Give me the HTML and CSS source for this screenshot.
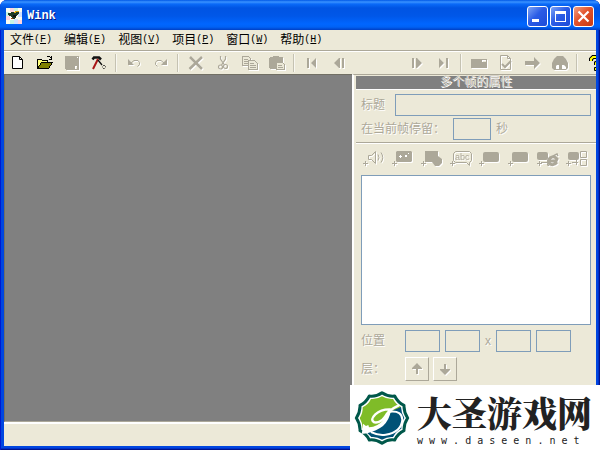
FILE: index.html
```html
<!DOCTYPE html>
<html lang="zh-CN">
<head>
<meta charset="utf-8">
<title>Wink</title>
<link rel="stylesheet" href="styles.css">
</head>
<body>
<div class="window">
  <header class="titlebar">
    <svg class="app-icon" width="16" height="16" viewBox="0 0 16 16" shape-rendering="crispEdges"><path fill="#fdfdf0" d="M0 0h16v16H0z"/><path fill="#ffd5dc" d="M4 0h4v4H4zM0 8h4v4H0zM12 12h4v4h-4z"/><path fill="#c8f5e4" d="M0 4h3v4H0zM8 0h4v3H8zM4 12h4v4H4z"/><path fill="#d2e2ff" d="M12 4h4v5h-4zM8 11h4v5H8z"/><path fill="#1e3b26" d="M2 5h3V4h4V3h4v3h-1v1h-1v1h-1v2H9v1H6V9H5V8H3V7H2z"/><path fill="#d9a514" d="M9 3h4v1H9zM8 4h2v1H8z"/><path fill="#111" d="M7 7h3v2H7z"/><path fill="#a24510" d="M5 10h2v1H5z"/></svg>
    <h1 class="title">Wink</h1>
    <button class="caption" aria-label="最小化"><svg width="19" height="19" viewBox="0 0 19 19" shape-rendering="crispEdges"><path fill="#fff" d="M4 12h7v3H4z"/></svg></button>
    <button class="caption" aria-label="最大化"><svg width="19" height="19" viewBox="0 0 19 19" shape-rendering="crispEdges"><path fill="#fff" fill-rule="evenodd" d="M4 4h11v11H4zM5 7v7h9V7z"/></svg></button>
    <button class="caption close" aria-label="关闭"><svg width="19" height="19" viewBox="0 0 19 19"><path stroke="#fff" stroke-width="2.2" d="M4.500 4.500l10 10M14.500 4.500l-10 10"/></svg></button>
  </header>
  <div class="client">
    <nav class="menu">
      <button>文件<span class="key">(<u>F</u>)</span></button>
      <button>编辑<span class="key">(<u>E</u>)</span></button>
      <button>视图<span class="key">(<u>V</u>)</span></button>
      <button>项目<span class="key">(<u>P</u>)</span></button>
      <button>窗口<span class="key">(<u>W</u>)</span></button>
      <button>帮助<span class="key">(<u>H</u>)</span></button>
    </nav>
    <div class="toolbar" role="toolbar" aria-label="工具栏">
      <button aria-label="新建"><svg width="16" height="16" viewBox="0 0 16 16"><path fill="#fff" stroke="#000" d="M2.500 1.500h7l3 3v9h-10zM9.500 1.500v3h3"/></svg></button>
      <button aria-label="打开"><svg width="16" height="16" viewBox="0 0 16 16" shape-rendering="crispEdges"><path fill="#ffff7a" stroke="#000" d="M.5 12.500v-8h4l1 1h5v2"/><path fill="#808000" stroke="#000" d="M.5 13.500l4-6h11l-4 6z"/><path fill="none" stroke="#000" d="M9.500 2.500l1-1h2l2 2M14.500 1v3h-3"/></svg></button>
      <button disabled aria-label="保存"><svg width="16" height="16" viewBox="0 0 16 16" shape-rendering="crispEdges"><path fill="currentColor" fill-rule="evenodd" d="M1 1h14v14H2l-1-1zM11 11h2v3h-2zM13 2h1v1h-1z"/></svg></button>
      <button aria-label="编译"><svg width="16" height="16" viewBox="0 0 16 16"><path fill="none" stroke="#111" stroke-width="2.500" d="M1.500 4.500L3 2.500h5l2 2"/><path stroke="#a91414" stroke-width="2" d="M7 4L2 14"/><path stroke="#111" stroke-width="1.300" d="M7 5l4 5"/><path fill="none" stroke="#111" stroke-dasharray="1 1" d="M13 10l2 2-2 2-2-2z"/></svg></button>
      <span class="rule"></span>
      <button disabled aria-label="撤销"><svg width="16" height="16" viewBox="0 0 16 16"><path fill="currentColor" d="M2 4v6h6z"/><path fill="none" stroke="currentColor" d="M5 8l3-2.500h4l1.500 2v2l-2 2"/></svg></button>
      <button disabled aria-label="重做"><svg width="16" height="16" viewBox="0 0 16 16"><path fill="currentColor" d="M14 4v6H8z"/><path fill="none" stroke="currentColor" d="M11 8L8 5.500H4l-1.500 2v2l2 2"/></svg></button>
      <span class="rule"></span>
      <button disabled aria-label="删除"><svg width="16" height="16" viewBox="0 0 16 16"><path stroke="currentColor" stroke-width="2.500" d="M2 2l12 12M14 2L1.500 14"/></svg></button>
      <button disabled aria-label="剪切"><svg width="16" height="16" viewBox="0 0 16 16"><g fill="none" stroke="currentColor" stroke-width="1.200"><path d="M5.500 1v3l4 6M10.500 1v3l-4 6"/><circle cx="5.500" cy="12" r="2"/><circle cx="10.500" cy="11.500" r="2"/></g></svg></button>
      <button disabled aria-label="复制"><svg width="16" height="16" viewBox="0 0 16 16" shape-rendering="crispEdges"><g fill="#ece9d8" stroke="currentColor"><path d="M.5 1.500h6l2 2v7h-8zM2 4.500h4M2 6.500h4M2 8.500h4"/><path d="M6.500 5.500h6l3 3v6h-9zM8 8.500h4M8 10.500h6M8 12.500h6"/></g></svg></button>
      <button disabled aria-label="粘贴"><svg width="16" height="16" viewBox="0 0 16 16" shape-rendering="crispEdges"><path fill="currentColor" d="M0 3l1-1h3V1h6v1h3l1 1v11H1l-1-1z"/><path fill="#ece9d8" stroke="currentColor" d="M7.500 7.500h6l2 2v5h-8zM9 10.500h4M9 12.500h5"/></svg></button>
      <span class="rule"></span>
      <button disabled aria-label="第一帧"><svg width="16" height="16" viewBox="0 0 16 16"><path fill="currentColor" d="M3 3h2v10H3zM12 3v10L7 8z"/></svg></button>
      <button disabled aria-label="上一帧"><svg width="16" height="16" viewBox="0 0 16 16"><path fill="currentColor" d="M8 3v10L3 8zM8 3h1v10H8zM11 3h2v10h-2z"/></svg></button>
      <span class="gap"></span>
      <button disabled aria-label="下一帧"><svg width="16" height="16" viewBox="0 0 16 16"><path fill="currentColor" d="M3 3h2v10H3zM7 3h1v10H7zM8 3v10l5-5z"/></svg></button>
      <button disabled aria-label="最后一帧"><svg width="16" height="16" viewBox="0 0 16 16"><path fill="currentColor" d="M3 3v10l5-5zM10 3h2v10h-2z"/></svg></button>
      <span class="rule"></span>
      <button disabled aria-label="帧"><svg width="18" height="16" viewBox="0 0 18 16" shape-rendering="crispEdges"><path fill="currentColor" fill-rule="evenodd" d="M1 4h16v9H1zM12 5v2h4V5z"/></svg></button>
      <button disabled aria-label="属性"><svg width="16" height="16" viewBox="0 0 16 16"><path fill="none" stroke="currentColor" d="M2.500.5h7l3 3v11h-10zM9.500.5v3h3"/><path fill="none" stroke="currentColor" stroke-width="2" d="M4 9l3 3 6-6"/></svg></button>
      <button disabled aria-label="转到"><svg width="18" height="16" viewBox="0 0 18 16"><path fill="currentColor" d="M1 6h9V2l6 6-6 6v-4H1z"/></svg></button>
      <button disabled aria-label="查找"><svg width="18" height="16" viewBox="0 0 18 16"><path fill="currentColor" d="M6 1h6l3 3 2 4v5l-2 2H3l-2-2V8l2-4z"/><path fill="#fff" d="M5 11l1-1h2v4H5zM11 10h2l2 2v2h-4z"/></svg></button>
      <span class="rule"></span>
      <button aria-label="帮助"><svg width="22" height="16" viewBox="0 0 22 16"><path fill="none" stroke="#000" stroke-width="4" d="M7 6V4l2-2h5l1 2-1 3-2 1v2"/><path fill="none" stroke="#ff0" stroke-width="2" d="M7 6V4l2-2h5l1 2-1 3-2 1v2"/><path fill="#ff0" stroke="#000" d="M10.500 12.500h3v3h-3z"/></svg></button>
    </div>
    <div class="workspace">
      <main class="canvas"></main>
      <aside class="panel">
        <h2 class="panel-title">多个帧的属性</h2>
        <div class="fields">
          <div class="row">
            <label class="name" for="caption">标题</label>
            <input class="grow" id="caption" disabled>
          </div>
          <div class="row">
            <label class="stay" for="stay">在当前帧停留：</label>
            <input class="seconds" id="stay" disabled>
            <span class="unit">秒</span>
          </div>
        </div>
        <div class="objects">
          <button disabled aria-label="添加声音"><svg width="22" height="18" viewBox="0 0 22 18"><g fill="none" stroke="currentColor"><path d="M0 13.500h5M2.500 11v5M5.500 5.500h3l4-4v12l-4-4h-3zM15 4.500q2 3 0 6M18 2.500q3.500 5 0 10"/></g></svg></button>
          <button disabled aria-label="添加按钮"><svg width="22" height="18" viewBox="0 0 22 18"><path fill="none" stroke="currentColor" d="M0 13.500h5M2.500 11v5"/><path fill="currentColor" d="M4 2l1-1h14l1 1v9l-1 1H5l-1-1z"/><path fill="#fff" d="M8 5h1v1h1v1H9v1H8V7H7V6h1zM13 5h2v2h-2zM16 3h1v1h-1z"/></svg></button>
          <button disabled aria-label="添加形状"><svg width="22" height="18" viewBox="0 0 22 18"><path fill="none" stroke="currentColor" d="M0 13.500h5M2.500 11v5"/><path fill="currentColor" d="M4 1h13v5l4 3v4l-3 3h-4l-3-4H4z"/></svg></button>
          <button disabled aria-label="添加文字"><svg width="22" height="18" viewBox="0 0 22 18"><path fill="none" stroke="currentColor" d="M0 13.500h5M2.500 11v5M5.500 1.500h14l2 2v7l-2 2v3l-3-3h-11l-2-2v-7z"/><text class="abc" x="5" y="10">abc</text></svg></button>
          <button disabled aria-label="添加按钮一"><svg width="22" height="18" viewBox="0 0 22 18"><path fill="none" stroke="currentColor" d="M0 13.500h5M2.500 11v5"/><rect fill="currentColor" x="4" y="2" width="16" height="10" rx="2"/></svg></button>
          <button disabled aria-label="添加按钮二"><svg width="22" height="18" viewBox="0 0 22 18"><path fill="none" stroke="currentColor" d="M0 13.500h5M2.500 11v5"/><rect fill="currentColor" x="4" y="2" width="16" height="10" rx="2"/></svg></button>
          <button disabled aria-label="添加网页链接"><svg width="22" height="18" viewBox="0 0 22 18"><path fill="none" stroke="currentColor" d="M0 13.500h5M2.500 11v5M4 12.500h7"/><rect fill="currentColor" x="0" y="2" width="11" height="8" rx="2"/><path fill="none" stroke="currentColor" stroke-width="3" d="M20 12q-3 4-7 2-3-3 0-6 4-3 7 1l-1 2h-7"/><path fill="none" stroke="currentColor" stroke-width="1.500" d="M12 15q-2 1-1-2 3-7 9-9l1 2"/></svg></button>
          <button disabled aria-label="添加跳转"><svg width="22" height="18" viewBox="0 0 22 18"><path fill="none" stroke="currentColor" d="M0 13.500h5M2.500 11v5M6 12.500h6M10.500 10v5M14.500 1.500h6v6h-6zM14.500 9.500h6v6h-6z"/><rect fill="currentColor" x="2" y="2" width="11" height="8" rx="2"/></svg></button>
        </div>
        <div class="details">
          <textarea aria-label="文本" readonly></textarea>
          <div class="row">
            <label class="name" for="left">位置</label>
            <input class="coord" id="left" disabled>
            <input class="coord" aria-label="上" disabled>
            <span class="times">x</span>
            <input class="coord" aria-label="宽" disabled>
            <input class="coord" aria-label="高" disabled>
          </div>
          <div class="row">
            <span class="name">层：</span>
            <button class="layer" disabled aria-label="上移"><svg width="16" height="16" viewBox="0 0 16 16"><path fill="currentColor" d="M3 7l5-5 5 5v1H9v5H7V8H3z"/></svg></button>
            <button class="layer" disabled aria-label="下移"><svg width="16" height="16" viewBox="0 0 16 16"><path fill="currentColor" d="M3 8h4V3h2v5h4v1l-5 5-5-5z"/></svg></button>
          </div>
        </div>
      </aside>
    </div>
    <footer class="status"></footer>
  </div>
</div>
<div class="watermark">
  <svg width="56" height="54" viewBox="0 0 166 162">
    <path fill="#fff" stroke="#00584a" stroke-width="9" stroke-linejoin="round" d="M83 5Q103 18 121 15Q131 35 149 43Q148 63 160 81Q148 99 149 119Q131 127 121 147Q101 144 83 157Q63 144 45 147Q35 127 17 119Q18 99 6 81Q18 63 17 43Q35 35 45 15Q65 18 83 5z"/>
    <path fill="#7fbc28" d="M83 16Q100 26 116 24Q125 41 140 48L128 90 52 132 25 112Q25 96 16 81 26 67 25 49 42 41 50 24 67 26 83 16z"/>
    <path fill="#005176" d="M140 48Q141 67 150 81 140 96 141 113 124 121 116 138 100 136 83 146 67 136 51 138L38 125 84 104 112 60z"/>
    <path fill="#fff" d="M22 128l3-15 1-15 9 7 7-3 2 7q26-2 41-20 12-15 17-33l8 2q-5 30-24 47-20 15-45 21-9 3-19 2z"/>
    <g fill="none" stroke="#fff" stroke-linecap="round">
      <path stroke-width="7" d="M108 55Q80 54 63 70Q46 87 60 94Q77 97 91 79Q101 58 132 44"/>
      <path stroke-width="6" d="M108 62Q143 59 144 86Q141 124 94 131Q72 134 52 124"/>
    </g>
  </svg>
  <div class="brand">
    <strong>大圣游戏网</strong>
    <span>w w w . d a s e e n . n e t</span>
  </div>
</div>
</body>
</html>
```
FILE: styles.css
```css
* {
  box-sizing: border-box;
}

body {
  margin: 0;
  background: #fff;
  color: #000;
  font: 12px/16px "Liberation Sans", "Noto Sans CJK SC", sans-serif;
}

button {
  display: flex;
  align-items: center;
  justify-content: center;
  margin: 0;
  padding: 0;
  border: 0;
  background: none;
  color: inherit;
  font: inherit;
}

svg {
  display: block;
  flex: none;
}

button:disabled {
  color: #aca899;
}

button:disabled svg {
  filter: drop-shadow(1px 1px 0 #fff);
}

.window {
  display: flex;
  flex-direction: column;
  min-height: 100vh;
  padding: 0 4px 4px;
  overflow: hidden;
  border-radius: 7px 7px 0 0;
  background: #0046e0;
  box-shadow: inset 1px 0 #0019cf, inset -1px -1px #00138c, inset -2px -2px #0030c8;
}

.titlebar {
  display: flex;
  align-items: center;
  gap: 2px;
  height: 30px;
  margin: 0 -4px;
  padding: 2px 6px 0;
  background: linear-gradient(#0058e6 0, #3a93ff 2px, #0a6af8 4px, #0054e3 8px, #0057e8 16px, #0066ff 24px, #0062f5 27px, #003fc4 30px);
}

.title {
  flex: 1;
  margin: 0;
  padding-left: 3px;
  color: #fff;
  font: bold 12px/16px "Liberation Mono", monospace;
  text-shadow: 1px 1px #0a1883;
}

.caption {
  width: 21px;
  height: 21px;
  border: 1px solid #fff;
  border-radius: 3px;
  background: linear-gradient(135deg, #7ea4f5, #2b5ce6 45%, #1c4bd8);
}

.caption.close {
  background: linear-gradient(135deg, #f0a084, #e2522b 45%, #c93a12);
}

.client {
  display: flex;
  flex: 1;
  flex-direction: column;
  background: #ece9d8;
}

.menu {
  display: flex;
  height: 22px;
  border-bottom: 1px solid #fff;
  box-shadow: inset 0 -1px #aca899;
}

.menu button {
  padding: 0 6px 1px;
}

.key {
  font: 10px/16px "Liberation Mono", monospace;
}

.toolbar {
  display: flex;
  align-items: center;
  height: 22px;
  overflow: hidden;
}

.toolbar button {
  flex: none;
  width: 27px;
  height: 22px;
}

.rule {
  flex: none;
  width: 2px;
  height: 18px;
  margin: 0 3px;
  border-left: 1px solid #c5c2b2;
  background: #f8f7f0;
}

.gap {
  flex: none;
  width: 51px;
}

.workspace {
  display: flex;
  flex: 1;
  background: #ece9d8;
}

.canvas {
  flex: 1;
  border: 1px solid #716f64;
  border-right: 0;
  border-bottom-color: #aca899;
  background: #808080;
}

.panel {
  flex: none;
  width: 244px;
  border-top: 1px solid #aca899;
  border-left: 2px solid #fff;
  padding: 1px 0 0 2px;
  color: #aca899;
  text-shadow: 1px 1px #fff;
}

.panel-title {
  height: 14px;
  margin: 0;
  border-bottom: 1px solid #fff;
  background: #808080;
  color: #d4d0c4;
  font-size: 12px;
  font-weight: normal;
  line-height: 13px;
  text-align: center;
}

.fields {
  display: grid;
  gap: 2px;
  padding: 4px 5px 2px;
  border-bottom: 1px solid #aca899;
  box-shadow: 0 1px #fff;
}

.row {
  display: flex;
  align-items: center;
}

.name {
  width: 34px;
}

.stay {
  width: 92px;
}

.unit {
  padding-left: 5px;
}

input,
textarea {
  display: block;
  min-width: 0;
  margin: 0;
  padding: 2px;
  border: 1px solid #7f9db9;
  border-radius: 0;
  background: #ece9d8;
}

input {
  height: 22px;
}

.grow {
  flex: 1;
}

.seconds {
  width: 38px;
}

.objects {
  display: flex;
  gap: 7px;
  height: 32px;
  padding: 0 7px;
}

.abc {
  fill: currentColor;
  font: 9px "Liberation Sans", sans-serif;
  text-shadow: none;
}

.details {
  display: grid;
  gap: 5px;
  padding: 0 5px;
}

.details .name {
  width: 44px;
}

textarea {
  width: 100%;
  height: 150px;
  background: #fff;
  resize: none;
}

.coord {
  width: 35px;
  margin-right: 5px;
}

.times {
  width: 11px;
}

.layer {
  width: 24px;
  height: 24px;
  margin-right: 4px;
  border: 1px solid;
  border-color: #fff #aca899 #aca899 #fff;
}

.status {
  height: 24px;
  border-top: 2px solid #fff;
}

.watermark {
  position: absolute;
  right: 0;
  bottom: 0;
  display: flex;
  align-items: center;
  gap: 7px;
  width: 250px;
  height: 65px;
  padding-left: 4px;
  background: #fff;
  color: #222;
}

.brand {
  display: grid;
  white-space: nowrap;
}

.brand strong {
  font: 900 35px/46px "Noto Serif CJK SC", "Noto Sans CJK SC", serif;
}

.brand span {
  font: 10px/12px "DejaVu Sans Mono", monospace;
}
```
